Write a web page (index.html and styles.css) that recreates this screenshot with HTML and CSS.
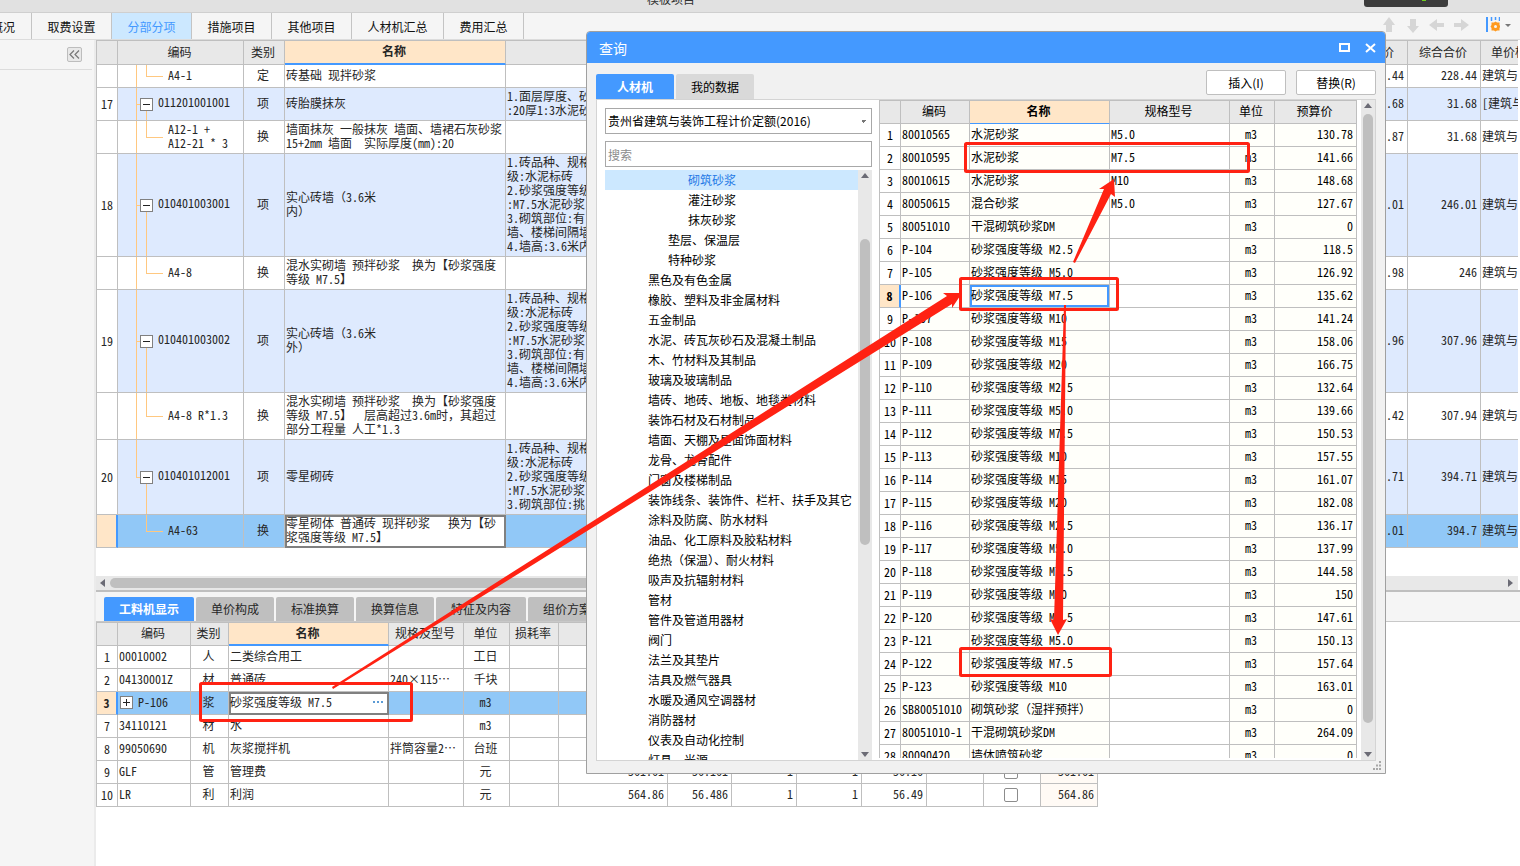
FILE: index.html
```html
<!DOCTYPE html>
<html lang="zh-CN">
<head>
<meta charset="utf-8">
<title>模板项目</title>
<link rel="stylesheet" href="styles.css">
</head>
<body>
<div class="app">
  <header class="titlebar"><span class="title">模板项目</span><span class="notch"><i></i></span></header>
  <nav class="topnav">
    <button class="first">工程概况</button><button>取费设置</button><button class="active">分部分项</button><button>措施项目</button><button>其他项目</button><button class="wide">人材机汇总</button><button>费用汇总</button>
    <div class="tools">
      <svg width="120" height="20" viewBox="0 0 120 20" aria-hidden="true">
        <g fill="#d6d6d6">
          <path d="M9 3l6 8h-3v7H6v-7H3z"/><path d="M33 19l-6-7h3V5h6v7h3z"/><path d="M49 11l8-6v4h7v4h-7v4z"/><path d="M89 11l-8-6v4h-7v4h7v4z"/>
        </g>
        <path d="M107 3v15" stroke="#49f" stroke-width="2"/><path d="M111.500 3v4M115.500 3v3M119.500 3v4" stroke="#49f" stroke-width="1.500"/>
        <path d="M115.500 7.500l1.500 1 2.500 0v2.500l1 1.500-1 1.500v2.500h-2.500l-1.500 1-1.500-1h-2.500v-2.500l-1-1.500 1-1.500V8.500h2.500z" fill="#ff9a1f"/><circle cx="115.500" cy="12.500" r="1.500" fill="#f5f5f5"/>
      </svg>
      <span class="caret"></span>
    </div>
  </nav>
  <div class="body">
    <aside class="side"><div class="sidehead"><button aria-label="收起"><svg width="11" height="9" viewBox="0 0 11 9"><path d="M5 .5l-4 4 4 4M10 .500l-4 4 4 4" fill="none" stroke="#777" stroke-width="1.200"/></svg></button></div></aside>
    <main class="main">
      <section class="upper">
      <table class="grid bill">
        <colgroup><col class="w21"><col class="w126"><col class="w41"><col class="w221"><col><col class="w73"><col class="w73"><col class="w37"></colgroup>
        <thead><tr><th></th><th>编码</th><th>类别</th><th class="cur">名称</th><th></th><th>综合单价</th><th>综合合价</th><th class="cut">单价构成</th></tr></thead>
        <tbody>
        <tr class="h23"><td></td><td class="code kid">A4-1</td><td class="c">定</td><td>砖基础 现拌砂浆</td><td></td><td class="r">.44</td><td class="r">228.44</td><td class="last">建筑与</td></tr>
        <tr class="h33 item"><td class="c n">17</td><td class="code par"><button class="box minus" aria-label="收起"></button>011201001001</td><td class="c">项</td><td>砖胎膜抹灰</td><td>1.面层厚度、砂<br>:20厚1:3水泥砂</td><td class="r">.68</td><td class="r">31.68</td><td class="last">[建筑与</td></tr>
        <tr class="h33"><td></td><td class="code kid">A12-1 +<br>A12-21 * 3</td><td class="c">换</td><td>墙面抹灰 一般抹灰 墙面、墙裙石灰砂浆<br>15+2mm 墙面  实际厚度(mm):20</td><td></td><td class="r">.87</td><td class="r">31.68</td><td class="last">建筑与</td></tr>
        <tr class="h103 item"><td class="c n">18</td><td class="code par"><button class="box minus" aria-label="收起"></button>010401003001</td><td class="c">项</td><td>实心砖墙（3.6米<br>内）</td><td>1.砖品种、规格<br>级:水泥标砖<br>2.砂浆强度等级<br>:M7.5水泥砂浆<br>3.砌筑部位:有<br>墙、楼梯间隔墙<br>4.墙高:3.6米内</td><td class="r">.01</td><td class="r">246.01</td><td class="last">建筑与</td></tr>
        <tr class="h33"><td></td><td class="code kid">A4-8</td><td class="c">换</td><td>混水实砌墙 预拌砂浆  换为【砂浆强度<br>等级 M7.5】</td><td></td><td class="r">.98</td><td class="r">246</td><td class="last">建筑与</td></tr>
        <tr class="h103 item"><td class="c n">19</td><td class="code par"><button class="box minus" aria-label="收起"></button>010401003002</td><td class="c">项</td><td>实心砖墙（3.6米<br>外）</td><td>1.砖品种、规格<br>级:水泥标砖<br>2.砂浆强度等级<br>:M7.5水泥砂浆<br>3.砌筑部位:有<br>墙、楼梯间隔墙<br>4.墙高:3.6米内</td><td class="r">.96</td><td class="r">307.96</td><td class="last">建筑与</td></tr>
        <tr class="h47"><td></td><td class="code kid">A4-8 R*1.3</td><td class="c">换</td><td>混水实砌墙 预拌砂浆  换为【砂浆强度<br>等级 M7.5】  层高超过3.6m时，其超过<br>部分工程量 人工*1.3</td><td></td><td class="r">.42</td><td class="r">307.94</td><td class="last">建筑与</td></tr>
        <tr class="h75 item"><td class="c n">20</td><td class="code par end"><button class="box minus" aria-label="收起"></button>010401012001</td><td class="c">项</td><td>零星砌砖</td><td>1.砖品种、规格<br>级:水泥标砖<br>2.砂浆强度等级<br>:M7.5水泥砂浆<br>3.砌筑部位:挑</td><td class="r">.71</td><td class="r">394.71</td><td class="last">建筑与</td></tr>
        <tr class="h33 sel"><td class="mark"></td><td class="code kid tail">A4-63</td><td class="c">换</td><td class="edit">零星砌体 普通砖 现拌砂浆   换为【砂<br>浆强度等级 M7.5】</td><td></td><td class="r">.01</td><td class="r">394.7</td><td class="last">建筑与</td></tr>
        </tbody>
      </table>
      <div class="hscroll"><span class="al"></span><span class="thumb"></span><span class="ar"></span></div>
      </section>
      <div class="subtabs"><button class="active w90">工料机显示</button><button>单价构成</button><button>标准换算</button><button>换算信息</button><button class="w90">特征及内容</button><button>组价方案</button></div>
      <div class="lower">
      <table class="grid res">
        <colgroup><col class="w21"><col class="w73"><col class="w38"><col class="w160"><col class="w75"><col class="w46"><col class="w49"><col class="w109"><col class="w64"><col class="w65"><col class="w65"><col class="w65"><col class="w57"><col class="w57"><col class="w57"></colgroup>
        <thead><tr><th></th><th>编码</th><th>类别</th><th class="cur">名称</th><th>规格及型号</th><th>单位</th><th>损耗率</th><th></th><th></th><th></th><th></th><th></th><th></th><th></th><th></th></tr></thead>
        <tbody>
        <tr><td class="c n">1</td><td>00010002</td><td class="c">人</td><td>二类综合用工</td><td></td><td class="c">工日</td><td></td><td></td><td></td><td></td><td></td><td></td><td></td><td></td><td></td></tr>
        <tr><td class="c n">2</td><td>04130001Z</td><td class="c">材</td><td>普通砖</td><td>240×115⋯</td><td class="c">千块</td><td></td><td></td><td></td><td></td><td></td><td></td><td></td><td></td><td></td></tr>
        <tr class="sel"><td class="c n mark">3</td><td><span class="node"><button class="box plus" aria-label="展开"></button>P-106</span></td><td class="c">浆</td><td class="edit"><span class="field">砂浆强度等级 M7.5<button class="more" aria-label="更多"><i></i><i></i><i></i></button></span></td><td></td><td class="c">m3</td><td></td><td></td><td></td><td></td><td></td><td></td><td></td><td></td><td></td></tr>
        <tr><td class="c n">7</td><td>34110121</td><td class="c">材</td><td>水</td><td></td><td class="c">m3</td><td></td><td></td><td></td><td></td><td></td><td></td><td></td><td></td><td></td></tr>
        <tr><td class="c n">8</td><td>99050690</td><td class="c">机</td><td>灰浆搅拌机</td><td>拌筒容量2⋯</td><td class="c">台班</td><td></td><td></td><td></td><td></td><td></td><td></td><td></td><td></td><td></td></tr>
        <tr><td class="c n">9</td><td>GLF</td><td class="c">管</td><td>管理费</td><td></td><td class="c">元</td><td></td><td class="r">561.61</td><td class="r">56.161</td><td class="r">1</td><td class="r">1</td><td class="r">56.16</td><td></td><td class="c"><input type="checkbox" aria-label="管理费"></td><td class="r tint">561.61</td></tr>
        <tr><td class="c n">10</td><td>LR</td><td class="c">利</td><td>利润</td><td></td><td class="c">元</td><td></td><td class="r">564.86</td><td class="r">56.486</td><td class="r">1</td><td class="r">1</td><td class="r">56.49</td><td></td><td class="c"><input type="checkbox" aria-label="利润"></td><td class="r tint">564.86</td></tr>
        </tbody>
      </table>
      </div>
    </main>
  </div>

  <div class="dialog" role="dialog" aria-label="查询">
    <div class="dhead"><span>查询</span><div class="wbtns"><button aria-label="最大化"><svg width="11" height="9"><rect x="1" y="1" width="9" height="7" fill="none" stroke="#fff" stroke-width="2"/></svg></button><button aria-label="关闭"><svg width="11" height="10"><path d="M1 1l9 8M10 1L1 9" stroke="#fff" stroke-width="2"/></svg></button></div></div>
    <div class="dbar"><div class="dtabs"><button class="active">人材机</button><button>我的数据</button></div><div class="acts"><button>插入(I)</button><button>替换(R)</button></div></div>
    <div class="dbody">
      <div class="left">
        <select aria-label="定额"><option>贵州省建筑与装饰工程计价定额(2016)</option></select>
        <input class="search" type="text" placeholder="搜索" aria-label="搜索">
        <div class="treewrap">
          <ul class="tree">
            <li class="l3 on">砌筑砂浆</li><li class="l3">灌注砂浆</li><li class="l3">抹灰砂浆</li><li class="l2">垫层、保温层</li><li class="l2">特种砂浆</li><li>黑色及有色金属</li><li>橡胶、塑料及非金属材料</li><li>五金制品</li><li>水泥、砖瓦灰砂石及混凝土制品</li><li>木、竹材料及其制品</li><li>玻璃及玻璃制品</li><li>墙砖、地砖、地板、地毯类材料</li><li>装饰石材及石材制品</li><li>墙面、天棚及屋面饰面材料</li><li>龙骨、龙骨配件</li><li>门窗及楼梯制品</li><li>装饰线条、装饰件、栏杆、扶手及其它</li><li>涂料及防腐、防水材料</li><li>油品、化工原料及胶粘材料</li><li>绝热（保温）、耐火材料</li><li>吸声及抗辐射材料</li><li>管材</li><li>管件及管道用器材</li><li>阀门</li><li>法兰及其垫片</li><li>洁具及燃气器具</li><li>水暖及通风空调器材</li><li>消防器材</li><li>仪表及自动化控制</li><li>灯具、光源</li>
          </ul>
          <div class="vscroll v1"><span class="au"></span><span class="thumb"></span><span class="ad"></span></div>
        </div>
      </div>
      <div class="right">
        <div class="clip">
        <table class="grid pick">
          <colgroup><col class="w21"><col class="w69"><col class="w140"><col class="w120"><col class="w45"><col class="w82"></colgroup>
          <thead><tr><th></th><th>编码</th><th class="cur">名称</th><th>规格型号</th><th>单位</th><th>预算价</th></tr></thead>
          <tbody>
          <tr><td class="c n">1</td><td>80010565</td><td>水泥砂浆</td><td class="w">M5.0</td><td class="c">m3</td><td class="r">130.78</td></tr>
          <tr><td class="c n">2</td><td>80010595</td><td>水泥砂浆</td><td class="w">M7.5</td><td class="c">m3</td><td class="r">141.66</td></tr>
          <tr><td class="c n">3</td><td>80010615</td><td>水泥砂浆</td><td class="w">M10</td><td class="c">m3</td><td class="r">148.68</td></tr>
          <tr><td class="c n">4</td><td>80050615</td><td>混合砂浆</td><td class="w">M5.0</td><td class="c">m3</td><td class="r">127.67</td></tr>
          <tr><td class="c n">5</td><td>80051010</td><td>干混砌筑砂浆DM</td><td class="w"></td><td class="c">m3</td><td class="r">0</td></tr>
          <tr><td class="c n">6</td><td>P-104</td><td>砂浆强度等级 M2.5</td><td class="w"></td><td class="c">m3</td><td class="r">118.5</td></tr>
          <tr><td class="c n">7</td><td>P-105</td><td>砂浆强度等级 M5.0</td><td class="w"></td><td class="c">m3</td><td class="r">126.92</td></tr>
          <tr><td class="c n mark">8</td><td>P-106</td><td class="focus">砂浆强度等级 M7.5</td><td class="w"></td><td class="c">m3</td><td class="r">135.62</td></tr>
          <tr><td class="c n">9</td><td>P-107</td><td>砂浆强度等级 M10</td><td class="w"></td><td class="c">m3</td><td class="r">141.24</td></tr>
          <tr><td class="c n">10</td><td>P-108</td><td>砂浆强度等级 M15</td><td class="w"></td><td class="c">m3</td><td class="r">158.06</td></tr>
          <tr><td class="c n">11</td><td>P-109</td><td>砂浆强度等级 M20</td><td class="w"></td><td class="c">m3</td><td class="r">166.75</td></tr>
          <tr><td class="c n">12</td><td>P-110</td><td>砂浆强度等级 M2.5</td><td class="w"></td><td class="c">m3</td><td class="r">132.64</td></tr>
          <tr><td class="c n">13</td><td>P-111</td><td>砂浆强度等级 M5.0</td><td class="w"></td><td class="c">m3</td><td class="r">139.66</td></tr>
          <tr><td class="c n">14</td><td>P-112</td><td>砂浆强度等级 M7.5</td><td class="w"></td><td class="c">m3</td><td class="r">150.53</td></tr>
          <tr><td class="c n">15</td><td>P-113</td><td>砂浆强度等级 M10</td><td class="w"></td><td class="c">m3</td><td class="r">157.55</td></tr>
          <tr><td class="c n">16</td><td>P-114</td><td>砂浆强度等级 M15</td><td class="w"></td><td class="c">m3</td><td class="r">161.07</td></tr>
          <tr><td class="c n">17</td><td>P-115</td><td>砂浆强度等级 M20</td><td class="w"></td><td class="c">m3</td><td class="r">182.08</td></tr>
          <tr><td class="c n">18</td><td>P-116</td><td>砂浆强度等级 M2.5</td><td class="w"></td><td class="c">m3</td><td class="r">136.17</td></tr>
          <tr><td class="c n">19</td><td>P-117</td><td>砂浆强度等级 M5.0</td><td class="w"></td><td class="c">m3</td><td class="r">137.99</td></tr>
          <tr><td class="c n">20</td><td>P-118</td><td>砂浆强度等级 M7.5</td><td class="w"></td><td class="c">m3</td><td class="r">144.58</td></tr>
          <tr><td class="c n">21</td><td>P-119</td><td>砂浆强度等级 M10</td><td class="w"></td><td class="c">m3</td><td class="r">150</td></tr>
          <tr><td class="c n">22</td><td>P-120</td><td>砂浆强度等级 M2.5</td><td class="w"></td><td class="c">m3</td><td class="r">147.61</td></tr>
          <tr><td class="c n">23</td><td>P-121</td><td>砂浆强度等级 M5.0</td><td class="w"></td><td class="c">m3</td><td class="r">150.13</td></tr>
          <tr><td class="c n">24</td><td>P-122</td><td>砂浆强度等级 M7.5</td><td class="w"></td><td class="c">m3</td><td class="r">157.64</td></tr>
          <tr><td class="c n">25</td><td>P-123</td><td>砂浆强度等级 M10</td><td class="w"></td><td class="c">m3</td><td class="r">163.01</td></tr>
          <tr><td class="c n">26</td><td>SB80051010</td><td>砌筑砂浆（湿拌预拌）</td><td class="w"></td><td class="c">m3</td><td class="r">0</td></tr>
          <tr><td class="c n">27</td><td>80051010-1</td><td>干混砌筑砂浆DM</td><td class="w"></td><td class="c">m3</td><td class="r">264.09</td></tr>
          <tr><td class="c n">28</td><td>80090420</td><td>墙体喷筑砂浆</td><td class="w"></td><td class="c">m3</td><td class="r">0</td></tr>
          </tbody>
        </table>
        </div>
        <div class="vscroll v2"><span class="au"></span><span class="thumb"></span><span class="ad"></span></div>
      </div>
    </div>
    <div class="dfoot"><svg width="10" height="10" viewBox="0 0 10 10"><path d="M7 1h2M4 4.500h2M7 4.500h2M1 8h2M4 8h2M7 8h2" stroke="#a8a8a8" stroke-width="2"/></svg></div>
  </div>

  <svg class="marks" width="1520" height="866" viewBox="0 0 1520 866" aria-hidden="true">
    <g fill="none" stroke="#ff2213" stroke-width="3">
      <rect x="965.500" y="143.500" width="283" height="28" rx="1"/>
      <rect x="960.500" y="278.500" width="157" height="31" rx="1"/>
      <rect x="960.500" y="648.500" width="150" height="27" rx="1"/>
      <rect x="200.500" y="683.500" width="211" height="37" rx="1"/>
    </g>
    <g fill="#ff2213">
      <path d="M332 687L947 296L943 293L962 293L952 308L952 304L333 689z"/>
      <path d="M1073 262L1104 189L1099 189L1114 179L1115 197L1111 194L1075 263z"/>
      <path d="M1064 305L1054 620L1050 619L1058 635L1067 619L1063 620L1066 305z"/>
    </g>
  </svg>
</div>
</body>
</html>
```
FILE: styles.css
```css
* { box-sizing: border-box; }
body {
  margin: 0;
  font: 12px/14px "Noto Sans CJK SC", "Liberation Sans", sans-serif;
  color: #262626;
  background: #fff;
}
button { font: inherit; color: inherit; border: 0; padding: 0; margin: 0; background: none; }
.app { position: relative; min-height: 100vh; display: flex; flex-direction: column; overflow: hidden; }

.titlebar {
  height: 13px;
  background: #e1e1e1;
  border-bottom: 1px solid #cfcfcf;
  display: flex;
  justify-content: space-between;
  padding: 0 72px 0 647px;
  overflow: hidden;
}
.title { margin-top: -8px; color: #333; }
.notch { width: 84px; height: 7px; background: #3c3c3c; border-radius: 0 0 3px 3px; padding-left: 58px; }
.notch i { display: block; width: 4px; height: 1px; background: #6fce1e; }

.topnav { height: 27px; display: flex; background: #f5f5f5; border-bottom: 1px solid #dcdcdc; }
.topnav > button { width: 80px; border-right: 1px solid #c4c4c4; color: #111; padding-top: 2px; }
.topnav > button.wide { width: 92px; }
.topnav > button.first { width: 32px; display: flex; justify-content: flex-end; align-items: center; padding-right: 16px; white-space: nowrap; overflow: hidden; }
.topnav > button.active { background: #cce8ff; color: #49f; }
.tools { margin-left: auto; padding: 1px 9px 0 0; display: flex; align-items: flex-start; gap: 5px; }
.caret { border: 3px solid transparent; border-top: 3px solid #777; border-bottom: 0; margin-top: 10px; }

.body { flex: 1; display: flex; }
.side { width: 96px; background: #f5f5f5; border-right: 2px solid #ebebeb; }
.sidehead { height: 30px; margin-right: 2px; border-bottom: 1px solid #dcdcdc; display: flex; justify-content: flex-end; padding: 7px 10px 0 0; }
.sidehead button { width: 15px; height: 15px; border: 1px solid #bdbdbd; border-radius: 2px; background: #e8e8e8; display: grid; place-items: center; }
.main { flex: 1; min-width: 0; }
.upper { height: 552px; display: flex; flex-direction: column; padding-right: 2px; border-bottom: 2px solid #bfbfbf; }

.grid {
  table-layout: fixed;
  border-collapse: separate;
  border-spacing: 0;
  border-left: 1px solid #bfbfbf;
  border-top: 1px solid #bfbfbf;
  font-family: "Noto Sans Mono CJK SC", "Noto Sans CJK SC", monospace;
}
.grid th, .grid td {
  height: 23px;
  padding: 0 3px 2px 1px;
  border-right: 1px solid #bfbfbf;
  border-bottom: 1px solid #bfbfbf;
  overflow: hidden;
  white-space: pre;
  text-align: left;
}
.grid th { background: #e8e8e8; font-weight: normal; text-align: center; }
.grid th.cur { background: #ffe6c8; font-weight: bold; border-bottom: 2px solid #49f; }
.grid .c { text-align: center; }
.grid .n { padding: 0; }
.grid .r { text-align: right; }
.bill { width: 100%; }
.bill th { height: 24px; }
.bill th.cut { text-align: left; padding-left: 10px; padding-right: 0; border-right: 0; }
.bill td.last { padding-left: 1px; padding-right: 0; border-right: 0; }
.bill .h33 td { height: 33px; }
.bill .h47 td { height: 47px; }
.bill .h75 td { height: 75px; }
.bill .h103 td { height: 103px; }
.item td { background-color: #deeafe; }
.item td.n { background-color: #fff; }
.grid .sel td { background-color: #91c8f7; }
.grid td.mark, .grid .sel td.mark { background-color: #ffe6c8; border-right: 2px solid #49f; font-weight: bold; }
.grid .sel td.edit { background: #fff; box-shadow: inset 2px 2px #808080, inset -1px -1px #808080; border-color: #808080; }
.grid td.focus { box-shadow: inset 0 0 0 2px #49f; }

.grid td.code { background-repeat: no-repeat; --o: linear-gradient(#ffc880, #ffc880); }
.grid td.kid {
  padding-left: 50px;
  background-image: var(--o), var(--o), var(--o);
  background-position: 18px 0, 28px 0, 28px 50%;
  background-size: 1px 100%, 1px 50%, 17px 1px;
}
.grid td.kid.tail { background-size: 0 0, 1px 50%, 17px 1px; }
.grid td.par {
  padding-left: 22px;
  background-image: var(--o), var(--o), var(--o);
  background-position: 18px 0, 28px 100%, 18px 50%;
  background-size: 1px 100%, 1px 50%, 5px 1px;
}
.grid td.par.end { background-size: 1px 50%, 1px 50%, 5px 1px; }
.box { width: 13px; height: 13px; border: 1px solid #808080; background: linear-gradient(#222, #222) center / 7px 1px no-repeat #fff; vertical-align: middle; margin-right: 5px; }
.box.plus { background: linear-gradient(#222, #222) center / 7px 1px no-repeat, linear-gradient(#222, #222) center / 1px 7px no-repeat, #fff; margin-left: 1px; }
.node { display: flex; align-items: center; }
.field { display: flex; align-items: center; justify-content: space-between; }
.more { display: flex; gap: 2px; padding-right: 2px; }
.more i { width: 2px; height: 2px; background: #5b9bd5; }
.tint { background: #fffaf5; }

.w21 { width: 21px; } .w37 { width: 37px; } .w38 { width: 38px; } .w41 { width: 41px; } .w45 { width: 45px; } .w46 { width: 46px; }
.w49 { width: 49px; } .w57 { width: 57px; } .w64 { width: 64px; } .w65 { width: 65px; } .w69 { width: 69px; }
.w73 { width: 73px; } .w75 { width: 75px; } .w82 { width: 82px; } .w109 { width: 109px; } .w120 { width: 120px; }
.w126 { width: 126px; } .w140 { width: 140px; } .w160 { width: 160px; } .w221 { width: 221px; }

.hscroll { margin-top: auto; height: 14px; background: #e8e8e8; display: flex; align-items: center; gap: 5px; padding: 0 5px 0 4px; }
.hscroll .thumb { flex: 1; height: 10px; border-radius: 5px; background: #bfbfbf; margin-right: 120px; }
.al, .ar { border: 4px solid transparent; }
.al { border-left: 0; border-right: 5px solid #6b6b75; }
.ar { border-right: 0; border-left: 5px solid #6b6b75; }

.subtabs { height: 30px; background: #f5f5f5; border-bottom: 1px solid #c8c8c8; display: flex; gap: 2px; padding: 5px 0 0 8px; }
.subtabs button { width: 78px; height: 24px; background: #bfbfbf; border-radius: 2px 2px 0 0; }
.subtabs button.w90 { width: 90px; }
.subtabs .active { background: #49f; color: #fff; font-weight: bold; }
.res { width: 1002px; }
.res input { appearance: none; width: 14px; height: 14px; margin: 0; border: 1px solid #8c8c8c; border-radius: 2px; background: #fff; vertical-align: middle; }

.dialog {
  position: absolute;
  left: 586px;
  top: 31px;
  width: 800px;
  height: 743px;
  border: 1px solid #a0a0a0;
  border-radius: 4px 4px 0 0;
  background: #f1f1f1;
  display: flex;
  flex-direction: column;
  overflow: hidden;
  color: #000;
}
.dhead { height: 31px; background: #49f; color: #fff; display: flex; justify-content: space-between; align-items: center; padding: 0 9px 0 12px; font-size: 14px; line-height: 20px; }
.wbtns { display: flex; gap: 15px; }
.wbtns button { display: grid; place-items: center; }
.dbar { height: 36px; display: flex; justify-content: space-between; padding: 0 9px; }
.dtabs { display: flex; gap: 2px; align-items: flex-end; }
.dtabs button { width: 78px; height: 25px; background: #d9d9d9; border-radius: 2px 2px 0 0; }
.dtabs .active { background: #49f; color: #fff; font-weight: bold; }
.acts { display: flex; gap: 10px; padding-top: 7px; }
.acts button { width: 80px; height: 25px; border: 1px solid #bfbfbf; border-radius: 2px; background: #fff; }
.dbody { flex: 1; min-height: 0; margin: 0 9px; border: 1px solid #d4d4d4; background: #fff; display: flex; }
.left { width: 282px; padding: 8px 7px 0 8px; display: flex; flex-direction: column; }
.left select, .search { width: 267px; height: 26px; border: 1px solid #a8a8a8; border-radius: 0; padding: 0 2px; font: inherit; color: #000; background: #fff; }
.left select {
  appearance: none;
  background-image: linear-gradient(to bottom left, #777 50%, transparent 50%), linear-gradient(to bottom right, #777 50%, transparent 50%);
  background-size: 3px 3px;
  background-position: 255px 11px, 258px 11px;
  background-repeat: no-repeat;
}
.search { margin-top: 7px; }
.search::placeholder { color: #8c8c8c; }
.treewrap { flex: 1; min-height: 0; display: flex; margin-top: 3px; }
.tree { flex: 1; margin: 0; padding: 0; list-style: none; overflow: hidden; }
.tree li { height: 20px; line-height: 20px; padding-left: 43px; white-space: nowrap; }
.tree .l2 { padding-left: 63px; }
.tree .l3 { padding-left: 83px; }
.tree .on { background: #cce8ff; color: #1f78e6; }
.vscroll { width: 14px; background: #e8e8e8; display: flex; flex-direction: column; align-items: center; padding: 3px 0; }
.au, .ad { border: 4px solid transparent; }
.au { border-top: 0; border-bottom: 5px solid #6b6b75; }
.ad { border-bottom: 0; border-top: 5px solid #6b6b75; margin-top: auto; }
.vscroll .thumb { width: 10px; border-radius: 5px; background: #bfbfbf; }
.v1 .thumb { margin-top: 61px; height: 306px; }
.v2 .thumb { margin-top: 6px; height: 609px; }
.right { flex: 1; display: flex; justify-content: space-between; min-width: 0; }
.clip { height: 658px; overflow: hidden; }
.pick { width: 478px; }
.pick th.cur { border-bottom-width: 1px; }
.pick td { background-color: #fffffa; }
.pick td.n:not(.mark), .pick td.w { background-color: #fff; }
.dfoot { height: 12px; display: flex; justify-content: flex-end; padding-right: 3px; }

.marks { position: absolute; left: 0; top: 0; pointer-events: none; }
```
